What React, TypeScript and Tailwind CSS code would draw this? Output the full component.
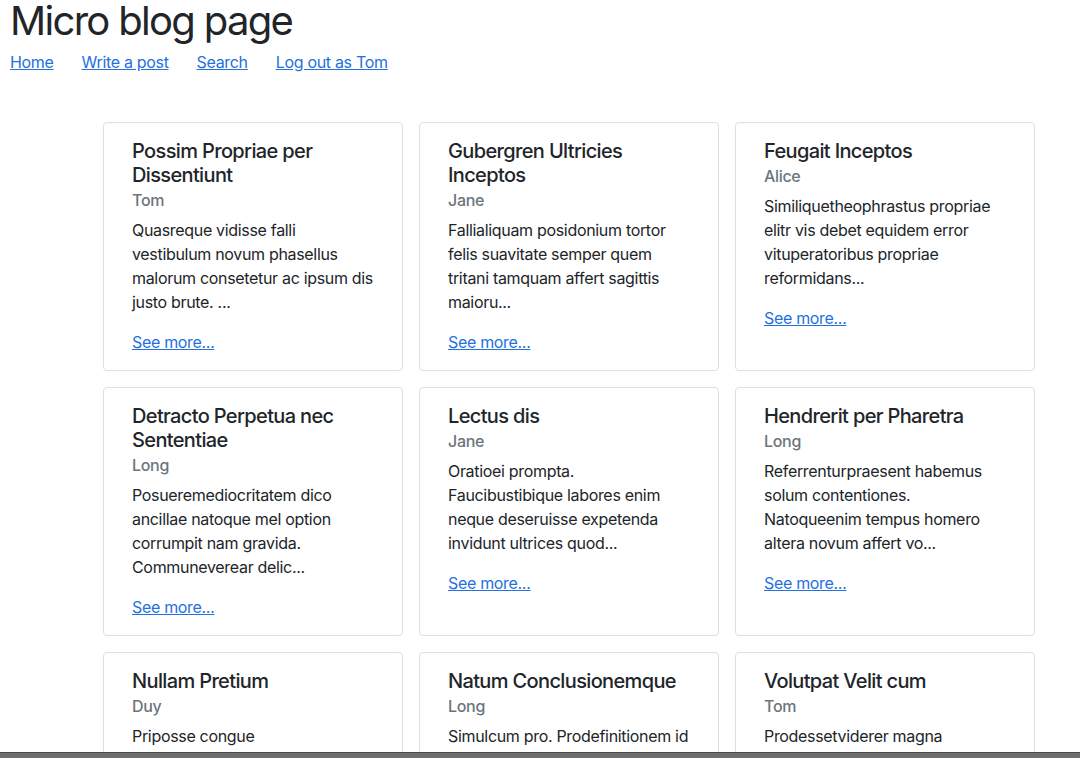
import React from "react";

type Post = {
  title: string;
  author: string;
  excerpt: string;
};

const posts: Post[] = [
  {
    title: "Possim Propriae per Dissentiunt",
    author: "Tom",
    excerpt: "Quasreque vidisse falli vestibulum novum phasellus malorum consetetur ac ipsum dis justo brute. ...",
  },
  {
    title: "Gubergren Ultricies Inceptos",
    author: "Jane",
    excerpt: "Fallialiquam posidonium tortor felis suavitate semper quem tritani tamquam affert sagittis maioru...",
  },
  {
    title: "Feugait Inceptos",
    author: "Alice",
    excerpt: "Similiquetheophrastus propriae elitr vis debet equidem error vituperatoribus propriae reformidans...",
  },
  {
    title: "Detracto Perpetua nec Sententiae",
    author: "Long",
    excerpt: "Posueremediocritatem dico ancillae natoque mel option corrumpit nam gravida. Communeverear delic...",
  },
  {
    title: "Lectus dis",
    author: "Jane",
    excerpt: "Oratioei prompta. Faucibustibique labores enim neque deseruisse expetenda invidunt ultrices quod...",
  },
  {
    title: "Hendrerit per Pharetra",
    author: "Long",
    excerpt: "Referrenturpraesent habemus solum contentiones. Natoqueenim tempus homero altera novum affert vo...",
  },
  {
    title: "Nullam Pretium",
    author: "Duy",
    excerpt: "Priposse congue consequuntursadipscing nobis graeco nisl. Patrioque...",
  },
  {
    title: "Natum Conclusionemque",
    author: "Long",
    excerpt: "Simulcum pro. Prodefinitionem id mazim scripta libris disputando...",
  },
  {
    title: "Volutpat Velit cum",
    author: "Tom",
    excerpt: "Prodessetviderer magna noluissevituperata dolore definiebas nisl...",
  },
];

const links = ["Home", "Write a post", "Search", "Log out as Tom"];

const PostCard: React.FC<{ post: Post }> = ({ post }) => {
  return (
    <div className="border border-[#dfdfdf] rounded-[4px] bg-white px-7 pt-4 pb-4">
      <h5 className="text-[20px] leading-[24px] font-medium tracking-[-0.032em] text-[#212529]">{post.title}</h5>
      <h6 className="mt-px text-[16px] leading-[24px] font-medium tracking-[-0.02em] text-[#6c757d]">{post.author}</h6>
      <p className="mt-[6px] text-[16px] leading-[24px] tracking-[-0.02em] text-[#212529]">{post.excerpt}</p>
      <a href="#" className="mt-4 inline-block text-[16px] leading-[24px] tracking-[-0.02em] text-[#2470e0] underline">
        See more...
      </a>
    </div>
  );
};

export default function App() {
  return (
    <div className="min-h-[758px] bg-white font-['Inter',sans-serif] text-[#212529]">
      <div className="px-[10px]">
        <h1 className="text-[40px] leading-[42px] font-normal tracking-[-0.042em]">Micro blog page</h1>
        <nav className="flex gap-[28px] mt-[8px] text-[16px] leading-[24px] tracking-[-0.02em]">
          {links.map((l) => (
            <a key={l} href="#" className="text-[#2470e0] underline">
              {l}
            </a>
          ))}
        </nav>
      </div>
      <div className="ml-[103px] mt-[48px] grid grid-cols-[300px_300px_300px] gap-4 pb-10">
        {posts.map((p) => (
          <PostCard key={p.title} post={p} />
        ))}
      </div>
      <div className="fixed left-0 right-0 bottom-0 h-[6px] bg-[#6e6e6e] border-t border-[#4a4a4a]" />
    </div>
  );
}
